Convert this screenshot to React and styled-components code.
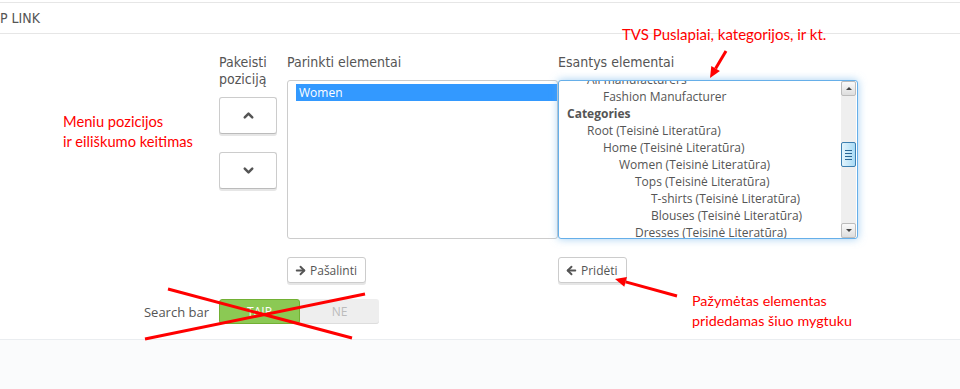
import React from "react";
import styled, { createGlobalStyle } from "styled-components";
import { ArrowRight, ArrowLeft, ChevronUp, ChevronDown } from "lucide-react";

const Global = createGlobalStyle`
  html, body { margin: 0; padding: 0; background: #fff; }
  body { font-family: "Open Sans", "Liberation Sans", sans-serif; color: #555; }
  * { box-sizing: border-box; }
`;

const CONDENSED = `"Liberation Sans Narrow", "DejaVu Sans Condensed", "Roboto Condensed", Roboto, sans-serif`;

const Page = styled.div`
  position: relative;
  width: 960px;
  height: 389px;
  overflow: hidden;
  display: flex;
  flex-direction: column;
  padding-top: 2px;
`;

const PanelHeading = styled.div`
  height: 32px;
  border-top: 1px solid #e6e6e6;
  border-bottom: 1px solid #e6e6e6;
  display: flex;
  align-items: center;
  font-family: ${CONDENSED};
  font-size: 14px;
  text-transform: uppercase;
  color: #555;
  padding-bottom: 1px;
`;

const Body = styled.div`
  padding-top: 20px;
`;

const ListsRow = styled.div`
  display: flex;
  padding-left: 219px;
`;

const PosColumn = styled.div`
  width: 58px;
  margin-right: 10px;
  display: flex;
  flex-direction: column;
`;

const ListColumn = styled.div`
  width: ${(p) => p.$w}px;
  display: flex;
  flex-direction: column;
  align-items: flex-start;
`;

const ColLabel = styled.div`
  font-family: ${CONDENSED};
  font-size: 14px;
  line-height: 17px;
  color: #555;
  margin-bottom: 9px;
  white-space: nowrap;
`;

const MoveButton = styled.button`
  width: 58px;
  height: 37px;
  margin-bottom: 18px;
  background: #fff;
  border: 1px solid #ccc;
  border-bottom-color: #bbb;
  border-radius: 3px;
  box-shadow: 0 2px 0 #e6e6e6;
  display: flex;
  align-items: center;
  justify-content: center;
  color: #555;
  padding: 0;
`;

const ListBox = styled.div`
  position: relative;
  width: 100%;
  height: 159px;
  background: #fff;
  border: 1px solid ${(p) => (p.$focused ? "#66afe9" : "#ccc")};
  border-radius: 3px;
  box-shadow: ${(p) =>
    p.$focused ? "0 0 8px rgba(102,175,233,0.6)" : "none"};
  display: flex;
  overflow: ${(p) => (p.$focused ? "hidden" : "visible")};
  z-index: ${(p) => (p.$focused ? 2 : 1)};
  font-size: 12px;
  color: #555;
`;

const Options = styled.div`
  flex: 1;
  overflow: hidden;
  padding: ${(p) => p.$pad};
`;

const OptionsInner = styled.div`
  margin-top: ${(p) => p.$offset || 0}px;
`;

const Option = styled.div`
  height: 17px;
  line-height: 17px;
  white-space: nowrap;
  padding-left: ${(p) => (p.$level ? 4 + p.$level * 16 : 0)}px;
  font-weight: ${(p) => (p.$group ? 700 : 400)};
`;

const SelectedOption = styled.div`
  height: 17px;
  line-height: 17px;
  margin-right: -12px;
  padding-left: 3px;
  background: #3399ff;
  color: #fff;
`;

const Scrollbar = styled.div`
  width: 15px;
  margin: 0 1px 0 0;
  display: flex;
  flex-direction: column;
  background: #efefef;
`;

const ScrollBtn = styled.div`
  width: 15px;
  height: 15px;
  border: 1px solid #bcbcbc;
  border-radius: 2px;
  background: linear-gradient(#fafafa, #dedede);
  display: flex;
  align-items: center;
  justify-content: center;
  &::after {
    content: "";
    border-left: 3px solid transparent;
    border-right: 3px solid transparent;
    ${(p) =>
      p.$down
        ? "border-top: 3px solid #444;"
        : "border-bottom: 3px solid #444;"}
  }
`;

const Track = styled.div`
  flex: 1;
  display: flex;
  flex-direction: column;
`;

const Thumb = styled.div`
  margin-top: ${(p) => p.$top}px;
  height: 25px;
  border: 1px solid #3c7fb1;
  border-radius: 2px;
  background: linear-gradient(90deg, #e3f4fc, #a9dbf6);
  display: flex;
  flex-direction: column;
  align-items: center;
  justify-content: center;
  gap: 2px;
  span {
    display: block;
    width: 7px;
    height: 1px;
    background: #2a6694;
  }
`;

const ActionButton = styled.button`
  margin-top: 18px;
  height: 26px;
  padding: 0 8px 0 6px;
  background: #fff;
  border: 1px solid #ccc;
  border-radius: 3px;
  box-shadow: 0 2px 0 #e6e6e6;
  display: flex;
  align-items: center;
  gap: 3px;
  font-family: "Open Sans", sans-serif;
  font-size: 12px;
  color: #555;
`;

const SearchRow = styled.div`
  display: flex;
  align-items: center;
  margin-top: 16px;
  height: 25px;
`;

const RowLabel = styled.div`
  width: 219px;
  padding-right: 10px;
  text-align: right;
  font-size: 13px;
  color: #555;
`;

const Switch = styled.div`
  width: 160px;
  height: 25px;
  display: flex;
  border-radius: 3px;
  overflow: hidden;
  background: #eee;
  box-shadow: inset 0 -1px 0 #ddd;
`;

const SwitchPart = styled.div`
  flex: 1;
  display: flex;
  align-items: center;
  justify-content: center;
  font-size: 12px;
  text-transform: uppercase;
  background: ${(p) => (p.$on ? "#8bc954" : "transparent")};
  border: ${(p) => (p.$on ? "1px solid #72b034" : "none")};
  border-radius: 3px;
  color: ${(p) => (p.$on ? "#fff" : "#bbb")};
`;

const Footer = styled.div`
  flex: 1;
  margin-top: 15px;
  border-top: 1px solid #eaedf0;
  background: #fafbfc;
`;

const Overlay = styled.svg`
  position: absolute;
  left: 0;
  top: 0;
  z-index: 10;
  pointer-events: none;
`;

const Note = styled.div`
  position: absolute;
  left: ${(p) => p.$x}px;
  top: ${(p) => p.$y}px;
  z-index: 11;
  font-family: Lato, "Open Sans", sans-serif;
  font-size: ${(p) => p.$size || 15}px;
  line-height: 20px;
  color: #ff0000;
  white-space: nowrap;
`;

const available = [
  { t: "All manufacturers", l: 1 },
  { t: "Fashion Manufacturer", l: 2 },
  { t: "Categories", l: 0, g: true },
  { t: "Root (Teisinė Literatūra)", l: 1 },
  { t: "Home (Teisinė Literatūra)", l: 2 },
  { t: "Women (Teisinė Literatūra)", l: 3 },
  { t: "Tops (Teisinė Literatūra)", l: 4 },
  { t: "T-shirts (Teisinė Literatūra)", l: 5 },
  { t: "Blouses (Teisinė Literatūra)", l: 5 },
  { t: "Dresses (Teisinė Literatūra)", l: 4 },
];

function Arrow({ x1, y1, x2, y2 }) {
  const a = Math.atan2(y2 - y1, x2 - x1);
  const L = 11, W = 5;
  const bx = x2 - L * Math.cos(a), by = y2 - L * Math.sin(a);
  const p1 = `${bx + W * Math.sin(a)},${by - W * Math.cos(a)}`;
  const p2 = `${bx - W * Math.sin(a)},${by + W * Math.cos(a)}`;
  return (
    <g>
      <line x1={x1} y1={y1} x2={bx} y2={by} stroke="#ff0000" strokeWidth="3" />
      <polygon points={`${x2},${y2} ${p1} ${p2}`} fill="#ff0000" />
    </g>
  );
}

export default function App() {
  return (
    <Page>
      <Global />
      <PanelHeading>P LINK</PanelHeading>
      <Body>
        <ListsRow>
          <PosColumn>
            <ColLabel>
              Pakeisti
              <br />
              poziciją
            </ColLabel>
            <MoveButton aria-label="up">
              <ChevronUp size={15} strokeWidth={4} />
            </MoveButton>
            <MoveButton aria-label="down">
              <ChevronDown size={15} strokeWidth={4} />
            </MoveButton>
          </PosColumn>
          <ListColumn $w={271}>
            <ColLabel>Parinkti elementai</ColLabel>
            <ListBox>
              <Options $pad="3px 0 0 8px">
                <SelectedOption>Women</SelectedOption>
              </Options>
            </ListBox>
            <ActionButton>
              <ArrowRight size={13} strokeWidth={3.5} />
              Pašalinti
            </ActionButton>
          </ListColumn>
          <ListColumn $w={300}>
            <ColLabel>Esantys elementai</ColLabel>
            <ListBox $focused>
              <Options $pad="0 0 0 8px">
                <OptionsInner $offset={-10}>
                  {available.map((o, i) => (
                    <Option key={i} $level={o.l} $group={o.g}>
                      {o.t}
                    </Option>
                  ))}
                </OptionsInner>
              </Options>
              <Scrollbar>
                <ScrollBtn />
                <Track>
                  <Thumb $top={46}>
                    <span />
                    <span />
                    <span />
                    <span />
                  </Thumb>
                </Track>
                <ScrollBtn $down />
              </Scrollbar>
            </ListBox>
            <ActionButton>
              <ArrowLeft size={13} strokeWidth={3.5} />
              Pridėti
            </ActionButton>
          </ListColumn>
        </ListsRow>
        <SearchRow>
          <RowLabel>Search bar</RowLabel>
          <Switch>
            <SwitchPart $on>TAIP</SwitchPart>
            <SwitchPart>NE</SwitchPart>
          </Switch>
        </SearchRow>
      </Body>
      <Footer />

      <Overlay width="960" height="389" viewBox="0 0 960 389">
        <line x1="168" y1="289" x2="352" y2="338" stroke="#ff0000" strokeWidth="3" />
        <line x1="145" y1="339" x2="365" y2="294" stroke="#ff0000" strokeWidth="3" />
        <Arrow x1={726} y1={51} x2={710} y2={78} />
        <Arrow x1={677} y1={296} x2={615} y2={279} />
      </Overlay>
      <Note $x={622} $y={24}>TVS Puslapiai, kategorijos, ir kt.</Note>
      <Note $x={63} $y={111} $size={14.7}>
        Meniu pozicijos
        <br />
        ir eiliškumo keitimas
      </Note>
      <Note $x={692} $y={291} $size={14.3}>
        Pažymėtas elementas
        <br />
        pridedamas šiuo mygtuku
      </Note>
    </Page>
  );
}
